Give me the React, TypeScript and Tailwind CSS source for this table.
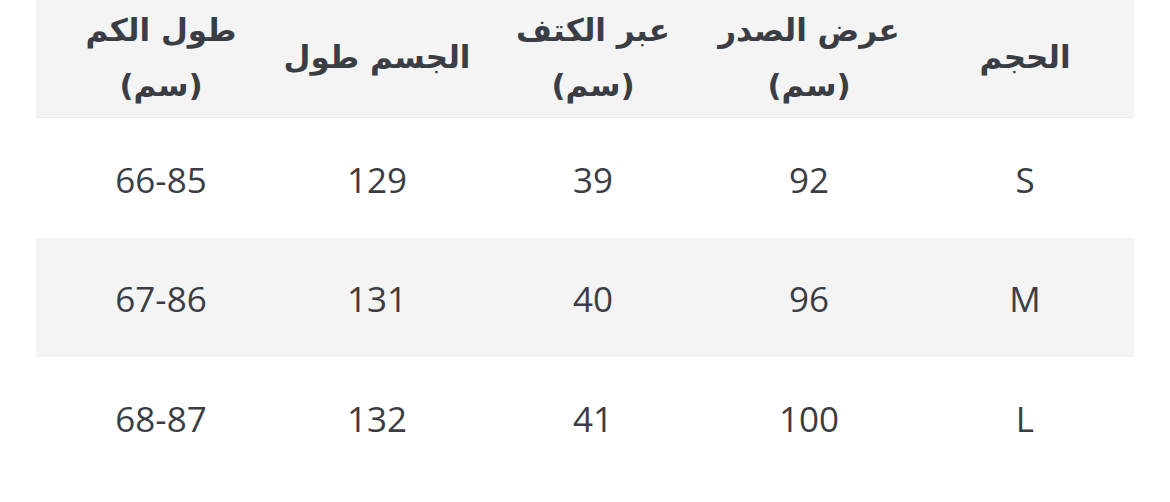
const headers = [
  { l1: "الحجم" },
  { l1: "عرض الصدر", l2: "(سم)" },
  { l1: "عبر الكتف", l2: "(سم)" },
  { l1: "الجسم طول" },
  { l1: "طول الكم", l2: "(سم)" },
];

const rows = [
  ["S", "92", "39", "129", "66-85"],
  ["M", "96", "40", "131", "67-86"],
  ["L", "100", "41", "132", "68-87"],
];

export default function App() {
  return (
    <div className="w-[1170px] h-[502px] bg-white overflow-hidden">
      <div dir="rtl" className="ml-[36px] w-[1098px] text-[#3b3d45]">
        {/* header */}
        <div className="grid grid-cols-[216px_216px_216px_216px_1fr] h-[118px] bg-[#f4f4f4] border-b border-[#ececec] pr-[1px] font-['DejaVu_Sans',sans-serif] font-bold text-[31px]">
          {headers.map((h, i) => (
            <div key={i} className="flex flex-col items-center justify-center pb-[2px]">
              <span className={i === 4 ? "pl-[17px] leading-[55px]" : "leading-[55px]"}>{h.l1}</span>
              {h.l2 && <span className={i === 4 ? "pl-[17px] leading-[55px]" : "leading-[55px]"}>{h.l2}</span>}
            </div>
          ))}
        </div>

        {/* rows */}
        {rows.map((r, ri) => (
          <div
            key={ri}
            className={
              "grid grid-cols-[216px_216px_216px_216px_1fr] pr-[1px] pt-[4px] font-['Open_Sans',sans-serif] text-[35px] " +
              (ri === 1 ? "h-[119px] bg-[#f4f4f4]" : "h-[120px] bg-white")
            }
          >
            {r.map((c, ci) => (
              <div key={ci} className={"flex items-center justify-center " + (ci === 4 ? "pl-[17px]" : "")}>
                <span dir="ltr">{c}</span>
              </div>
            ))}
          </div>
        ))}
      </div>
    </div>
  );
}
